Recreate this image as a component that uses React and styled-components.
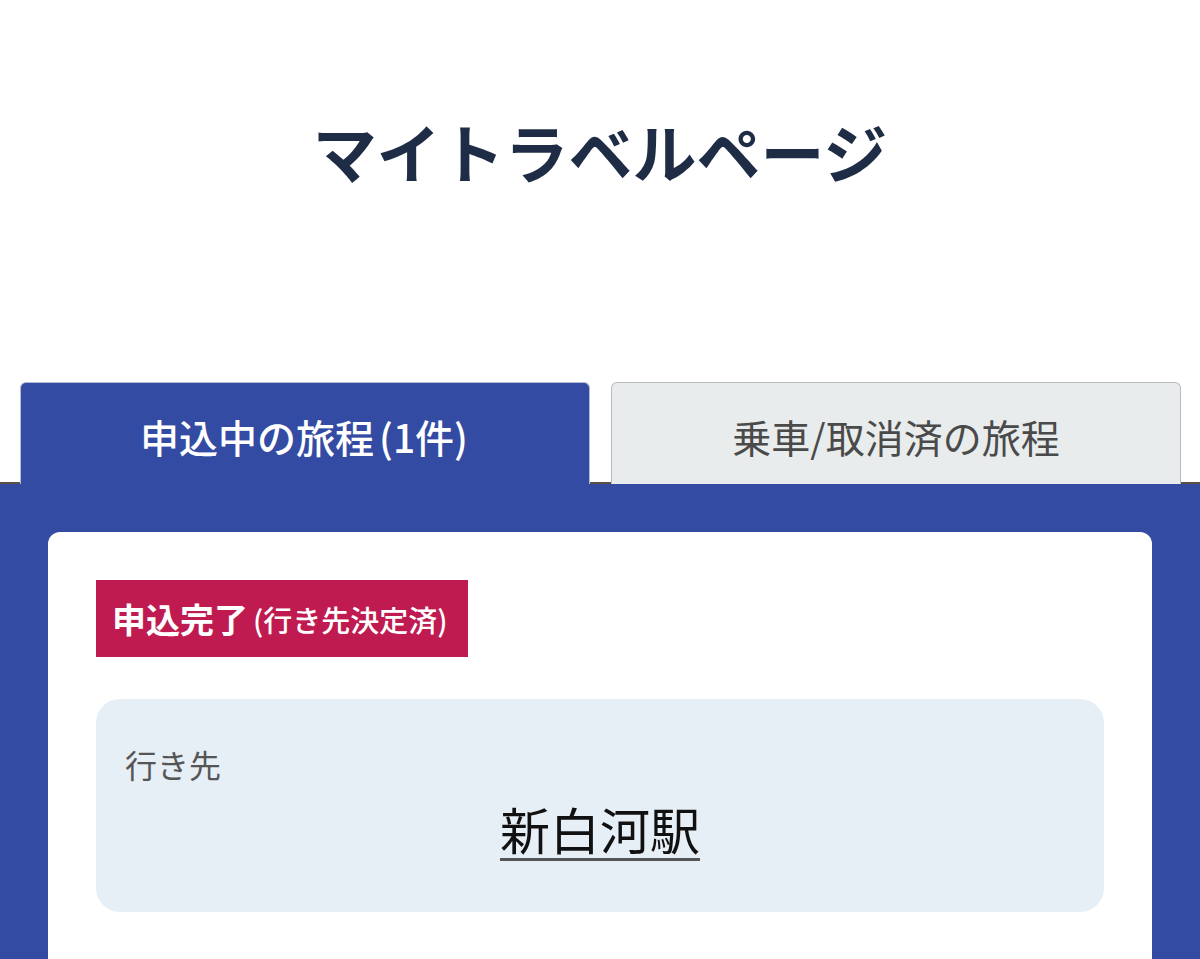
import React from 'react';
import styled, { createGlobalStyle } from 'styled-components';

const GlobalStyle = createGlobalStyle`
  body {
    margin: 0;
    background: #ffffff;
    font-family: "Noto Sans CJK JP", "Noto Sans", sans-serif;
  }
`;

const Page = styled.div`
  width: 100%;
`;

const Title = styled.h1`
  margin: 0;
  padding: 102px 0 184px;
  text-align: center;
  font-size: 64px;
  line-height: 96px;
  font-weight: 700;
  color: #1e2d45;
`;

const TabList = styled.div`
  display: flex;
  gap: 21px;
  padding: 0 19px 0 20px;
  border-bottom: 2px solid #5b5244;
`;

const Tab = styled.button`
  flex: 1;
  height: 102px;
  margin-bottom: -2px;
  display: flex;
  align-items: center;
  justify-content: center;
  padding: 4px 0 0;
  border: 1px solid ${(p) => (p.active ? '#b7bdd0' : '#b9bcbc')};
  border-bottom: none;
  border-radius: 6px 6px 0 0;
  background: ${(p) => (p.active ? '#334ba3' : '#e8ecec')};
  color: ${(p) => (p.active ? '#ffffff' : '#4a4a4a')};
  font-family: inherit;
  font-size: 39px;
  font-weight: ${(p) => (p.active ? 500 : 400)};
  cursor: pointer;
  position: relative;
  z-index: 1;
`;

// the parens in the tab label sit a little apart from the kanji
const Paren = styled.span`
  margin: 0 2px 0 5px;
`;

const Panel = styled.div`
  background: #334ba3;
  padding: 48px 48px 0;
`;

const Card = styled.div`
  background: #ffffff;
  border-radius: 12px 12px 0 0;
  padding: 48px 48px 120px;
`;

const Badge = styled.div`
  display: inline-flex;
  align-items: center;
  height: 77px;
  padding: 0 20px 0 16px;
  background: #c01b50;
  color: #ffffff;
  font-weight: 700;
  font-size: 34px;

  small {
    font-size: 29px;
    font-weight: 500;
    margin-left: 5px;
  }
`;

const DestBox = styled.div`
  margin-top: 42px;
  background: #e6eef6;
  border-radius: 24px;
  padding: 43px 29px 54px;
`;

const Label = styled.div`
  font-size: 32px;
  line-height: 45px;
  color: #555555;
`;

const Station = styled.a`
  display: block;
  width: fit-content;
  margin: 11px auto 0;
  font-size: 50px;
  line-height: 60px;
  color: #111111;
  text-decoration: underline;
  text-decoration-color: #555555;
  text-decoration-thickness: 3px;
  text-underline-offset: 8px;
`;

export default function App() {
  return (
    <Page>
      <GlobalStyle />
      <Title>マイトラベルページ</Title>
      <TabList>
        <Tab active>
          申込中の旅程<Paren>(1件)</Paren>
        </Tab>
        <Tab>乗車/取消済の旅程</Tab>
      </TabList>
      <Panel>
        <Card>
          <Badge>
            申込完了<small>(行き先決定済)</small>
          </Badge>
          <DestBox>
            <Label>行き先</Label>
            <Station>新白河駅</Station>
          </DestBox>
        </Card>
      </Panel>
    </Page>
  );
}
